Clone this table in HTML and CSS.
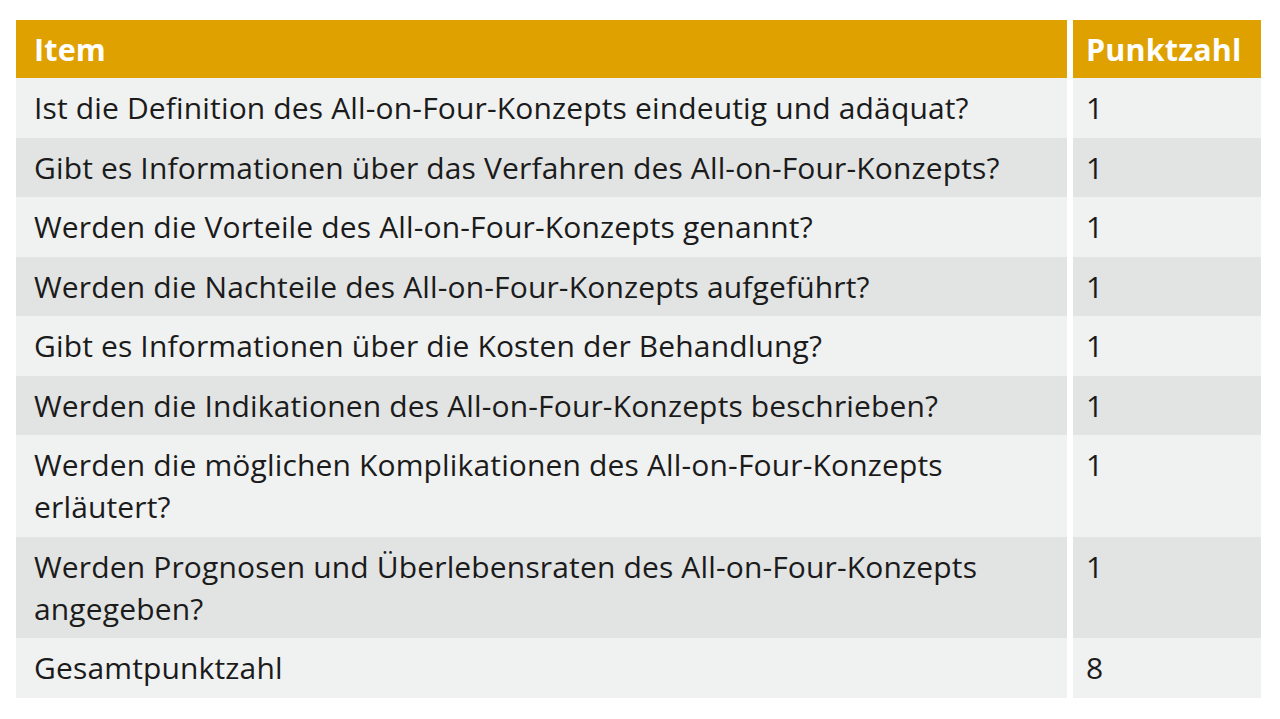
FILE: index.html
```html
<!DOCTYPE html>
<html lang="de">
<head>
<meta charset="utf-8">
<link rel="stylesheet" href="styles.css">
</head>
<body>
<div class="table">
  <div class="cell head item">Item</div>
  <div class="cell head score">Punktzahl</div>

  <div class="cell light item">Ist die Definition des All-on-Four-Konzepts eindeutig und adäquat?</div>
  <div class="cell light score">1</div>

  <div class="cell dark item">Gibt es Informationen über das Verfahren des All-on-Four-Konzepts?</div>
  <div class="cell dark score">1</div>

  <div class="cell light item">Werden die Vorteile des All-on-Four-Konzepts genannt?</div>
  <div class="cell light score">1</div>

  <div class="cell dark item">Werden die Nachteile des All-on-Four-Konzepts aufgeführt?</div>
  <div class="cell dark score">1</div>

  <div class="cell light item">Gibt es Informationen über die Kosten der Behandlung?</div>
  <div class="cell light score">1</div>

  <div class="cell dark item">Werden die Indikationen des All-on-Four-Konzepts beschrieben?</div>
  <div class="cell dark score">1</div>

  <div class="cell light item">Werden die möglichen Komplikationen des All-on-Four-Konzepts<br>erläutert?</div>
  <div class="cell light score">1</div>

  <div class="cell dark item">Werden Prognosen und Überlebensraten des All-on-Four-Konzepts<br>angegeben?</div>
  <div class="cell dark score">1</div>

  <div class="cell light item">Gesamtpunktzahl</div>
  <div class="cell light score">8</div>
</div>
</body>
</html>
```
FILE: styles.css
```css
html, body {
  margin: 0;
  background: #ffffff;
}
body {
  padding: 20px 0 0 16px;
  font-family: "Open Sans", "Noto Sans", sans-serif;
  color: #1b1b1b;
}
.table {
  display: grid;
  grid-template-columns: 1051px 188px;
  column-gap: 6px;
  width: 1245px;
}
.cell {
  font-size: 30px;
  line-height: 42px;
  letter-spacing: 0.15px;
  padding: 9px 8px 8.5px 18px;
}
.cell.score {
  padding-left: 13px;
}
.head {
  background: #dfa100;
  color: #ffffff;
  font-weight: 700;
  font-size: 30.5px;
  padding-top: 8px;
  padding-bottom: 8px;
}
.light {
  background: #f0f1f1;
}
.dark {
  background: #e2e3e3;
}
```
